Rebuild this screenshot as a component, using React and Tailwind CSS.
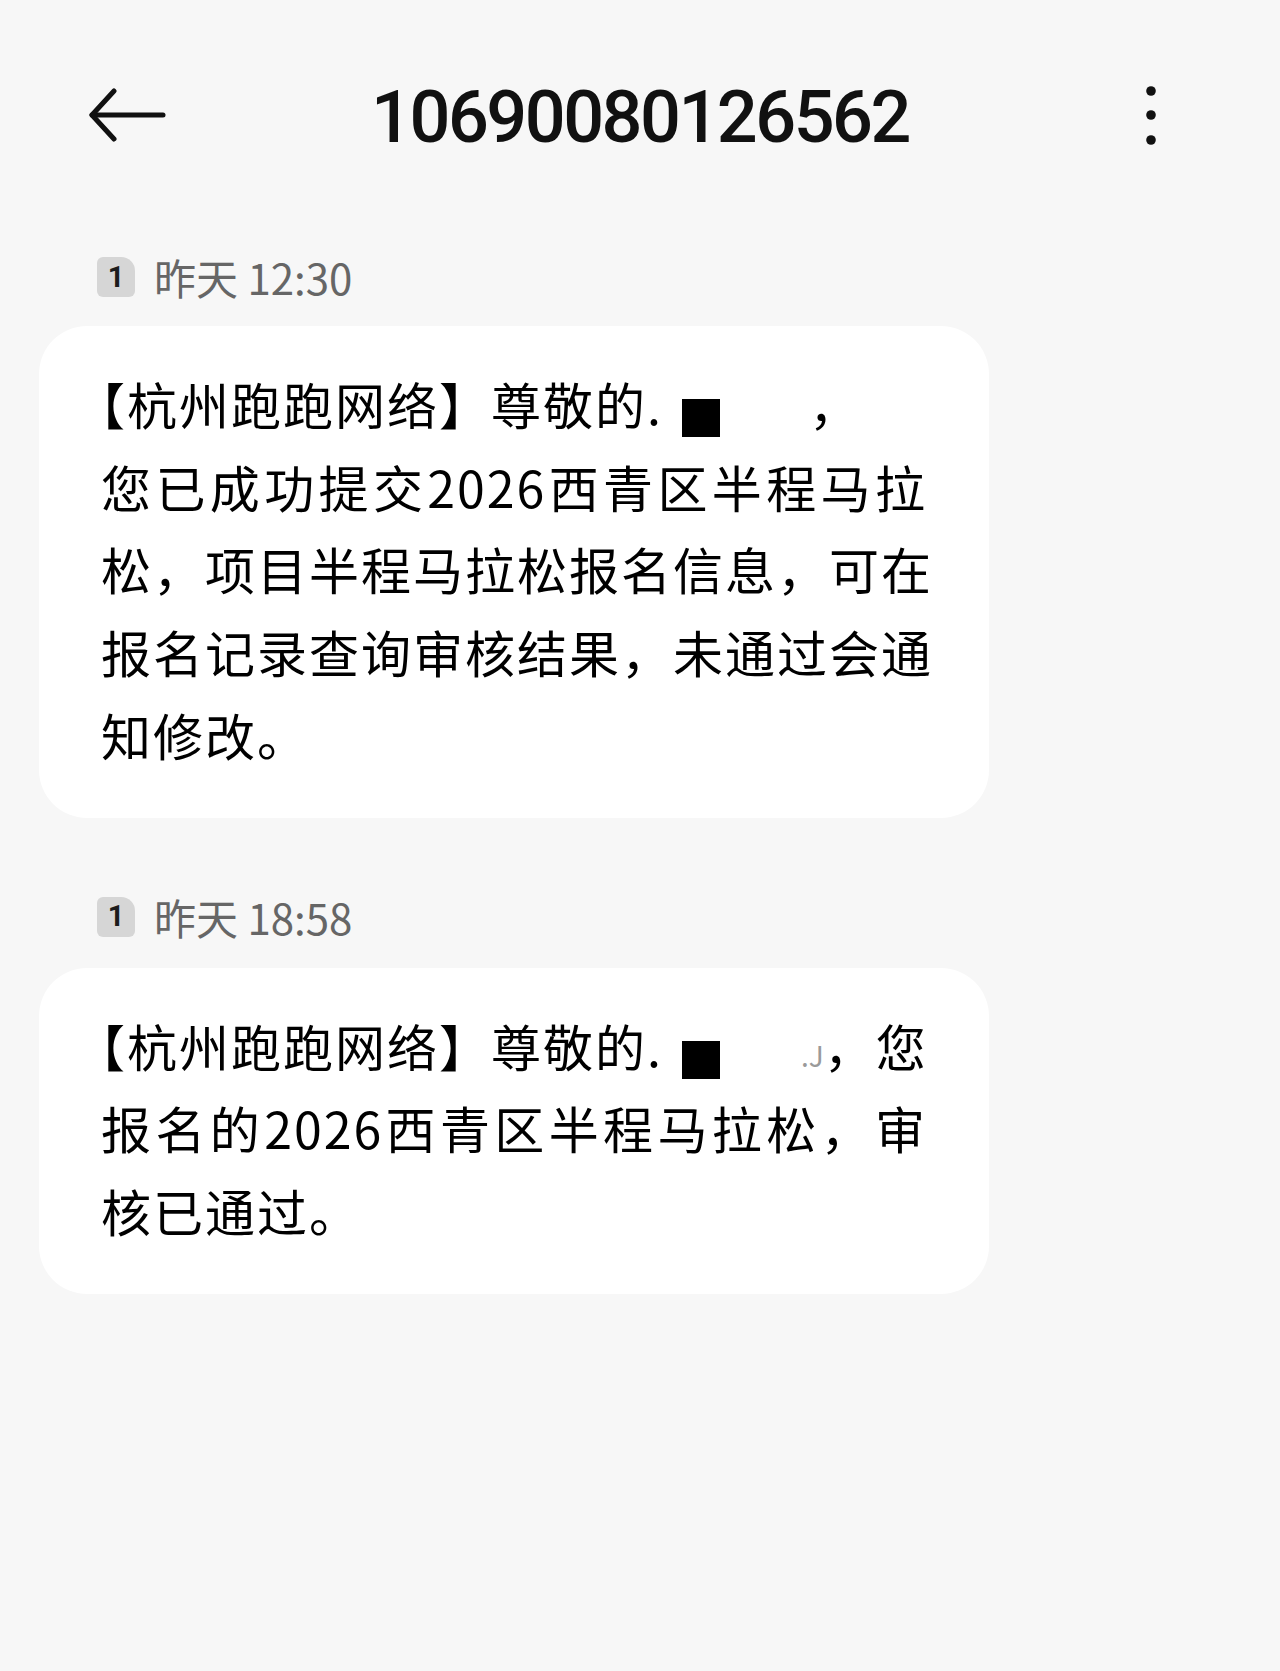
import React from "react";

const cjk = "font-['Noto_Sans_CJK_SC',sans-serif]";

function BackArrow() {
  return (
    <svg width="78" height="56" viewBox="0 0 78 56" fill="none" stroke="#111" strokeWidth="5" strokeLinecap="round" strokeLinejoin="round">
      <path d="M3 28 H74" />
      <path d="M25 4 L3 28 L25 52" />
    </svg>
  );
}

function MoreDots() {
  return (
    <svg width="12" height="60" viewBox="0 0 12 60" fill="#111">
      <circle cx="6" cy="6" r="4.8" />
      <circle cx="6" cy="30" r="4.8" />
      <circle cx="6" cy="55" r="4.8" />
    </svg>
  );
}

function SimBadge() {
  return (
    <div className="w-[38px] h-[40px] bg-[#d6d6d6] rounded-[6px] rounded-tr-[14px] flex items-center justify-center">
      <span className="font-['Roboto',sans-serif] font-bold text-[29px] leading-none text-[#1c1c1c]">1</span>
    </div>
  );
}

function Redacted() {
  return <span className="inline-block w-[38px] h-[38px] bg-black align-[-12px] ml-[19px]" />;
}

function TimeRow({ time }) {
  return (
    <div className="flex items-center h-[44px] pl-[58px] gap-[19px]">
      <SimBadge />
      <span className={`${cjk} text-[42px] leading-none text-[#666666]`}>{time}</span>
    </div>
  );
}

function Bubble({ children }) {
  return (
    <div className={`bg-white rounded-[48px] w-[950px] pl-[62px] pr-[62px] pt-[36px] pb-[42px] ${cjk} text-[50px] leading-[82.7px] tracking-[2px] text-black whitespace-nowrap`}>
      {children}
    </div>
  );
}

// full-width line: spread to the right edge like the phone does
function Full({ children }) {
  return <div className="text-justify [text-align-last:justify]">{children}</div>;
}

export default function App() {
  return (
    <div className="min-h-screen bg-[#f7f7f7]">
      <div className="grid grid-cols-[1fr_auto_1fr] items-center h-[236px]">
        <div className="pl-[89px] -mt-[6px]">
          <BackArrow />
        </div>
        <div className="font-['Roboto',sans-serif] font-medium text-[72px] leading-none tracking-[-2.5px] text-[#111]">
          10690080126562
        </div>
        <div className="justify-self-end pr-[123px] -mt-[6px]">
          <MoreDots />
        </div>
      </div>

      <div className="px-[39px] flex flex-col">
        <div className="mt-[19px]">
          <TimeRow time="昨天 12:30" />
        </div>
        <div className="mt-[27px]">
          <Bubble>
            <div className="-ml-[26px]">
              【杭州跑跑网络】尊敬的.<Redacted /><span className="inline-block w-[89px]" />，
            </div>
            <Full>您已成功提交2026西青区半程马拉</Full>
            <Full>松，项目半程马拉松报名信息，可在</Full>
            <Full>报名记录查询审核结果，未通过会通</Full>
            <div>知修改。</div>
          </Bubble>
        </div>

        <div className="mt-[77px]">
          <TimeRow time="昨天 18:58" />
        </div>
        <div className="mt-[29px]">
          <Bubble>
            <div className="-ml-[26px]">
              【杭州跑跑网络】尊敬的.<Redacted />
              <span className="inline-block w-[81px]" />
              <span className="text-[#9a9a9a] text-[28px] leading-none tracking-normal">.J</span>，您
            </div>
            <Full>报名的2026西青区半程马拉松，审</Full>
            <div>核已通过。</div>
          </Bubble>
        </div>
      </div>
    </div>
  );
}
